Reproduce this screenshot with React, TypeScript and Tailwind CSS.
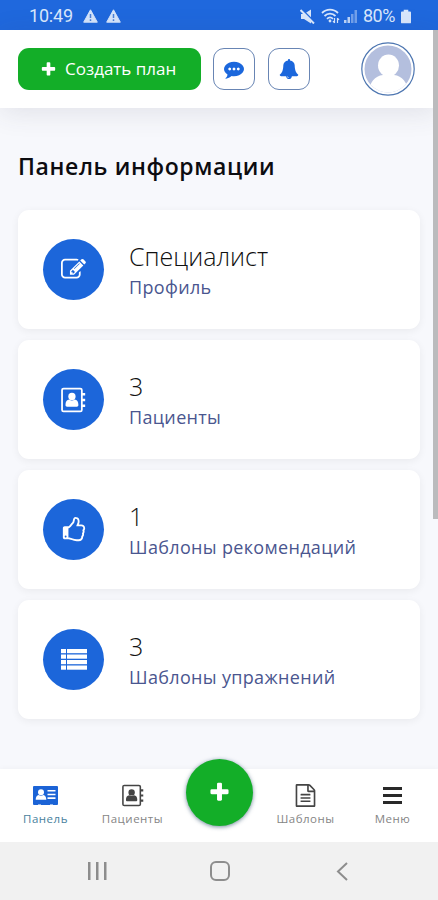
import type { ReactNode } from 'react';

function Glyph({ d, className }: { d: string; className: string }) {
  return (
    <svg viewBox="0 0 1792 1792" fill="currentColor" className={className}>
      <path d={d} />
    </svg>
  );
}

const PLUS =
  'M1600 736v192q0 40-28 68t-68 28h-416v416q0 40-28 68t-68 28h-192q-40 0-68-28t-28-68v-416h-416q-40 0-68-28t-28-68v-192q0-40 28-68t68-28h416v-416q0-40 28-68t68-28h192q40 0 68 28t28 68v416h416q40 0 68 28t28 68z';
const EDIT =
  'M888 1184l116-116-152-152-116 116v56h96v96h56zm440-720q-16-16-33 1l-350 350q-17 17-1 33t33-1l350-350q17-17 1-33zm80 594v190q0 119-84.5 203.5t-203.5 84.5h-832q-119 0-203.5-84.5t-84.5-203.5v-832q0-119 84.5-203.5t203.5-84.5h832q63 0 117 25 15 7 18 23 3 17-9 29l-49 49q-14 14-32 8-23-6-45-6h-832q-66 0-113 47t-47 113v832q0 66 47 113t113 47h832q66 0 113-47t47-113v-126q0-13 9-22l64-64q15-15 35-7t20 29zm-96-738l288 288-672 672h-288v-288zm444 132l-92 92-288-288 92-92q28-28 68-28t68 28l152 152q28 28 28 68t-28 68z';
const COMMENT =
  'M640 896q0-53-37.5-90.5t-90.5-37.5-90.5 37.5-37.5 90.5 37.5 90.5 90.5 37.5 90.5-37.5 37.5-90.5zm384 0q0-53-37.5-90.5t-90.5-37.5-90.5 37.5-37.5 90.5 37.5 90.5 90.5 37.5 90.5-37.5 37.5-90.5zm384 0q0-53-37.5-90.5t-90.5-37.5-90.5 37.5-37.5 90.5 37.5 90.5 90.5 37.5 90.5-37.5 37.5-90.5zm384 0q0 174-120 321.5t-326 233-450 85.5q-110 0-211-18-173 173-435 229-52 10-86 13-12 1-22-6t-13-18q-4-15 20-37 5-5 23.5-21.5t25.5-23.5 23.5-25.5 24-31.5 20.5-37 20-48 14.5-57.5 12.5-72.5q-146-90-229.5-216.5t-83.5-269.5q0-174 120-321.5t326-233 450-85.5 450 85.5 326 233 120 321.5z';
const BELL =
  'M912 1696q0-16-16-16-59 0-101.5-42.5t-42.5-101.5q0-16-16-16t-16 16q0 73 51.5 124.5t124.5 51.5q16 0 16-16zm816-288q0 52-38 90t-90 38h-448q0 106-75 181t-181 75-181-75-75-181h-448q-52 0-90-38t-38-90q50-42 91-88t85-119.5 74.5-158.5 50-206 19.5-260q0-152 117-282.5t307-158.5q-8-19-8-39 0-40 28-68t68-28 68 28 28 68q0 20-8 39 190 28 307 158.5t117 282.5q0 139 19.5 260t50 206 74.5 158.5 85 119.5 91 88z';
const THUMB =
  'M384 1344q0-26-19-45t-45-19-45 19-19 45 19 45 45 19 45-19 19-45zm1152-576q0-51-39-89.5t-89-38.5h-352q0-58 48-159.5t48-160.5q0-98-32-145t-128-47q-26 26-38 85t-30.5 125.5-59.5 109.5q-22 23-77 91-4 5-23 30t-31.5 41-34.5 42.5-40 44-38.5 35.5-40 27-35.5 9h-32v640h32q13 0 31.5 3t33 6.5 38 11 35 11.5 35.5 12.5 29 10.5q211 73 342 73h121q192 0 192-167 0-26-5-56 30-16 47.5-52.5t17.5-73.5-18-69q53-50 53-119 0-25-10-55.5t-25-47.5q32-1 53.5-47t21.5-81zm128-1q0 89-49 163 9 33 9 69 0 77-38 144 3 21 3 43 0 101-60 178 1 139-85 219.5t-227 80.5h-129q-96 0-189.5-22.5t-216.5-65.5q-116-40-138-40h-288q-53 0-90.5-37.5t-37.5-90.5v-640q0-53 37.5-90.5t90.5-37.5h274q36-24 137-155 58-75 107-128 24-25 35.5-85.5t30.5-126.5 62-108q39-37 90-37 84 0 151 32.5t102 101.5 35 186q0 93-48 192h176q104 0 180 76t76 179z';
const FILE =
  'M1596 380q28 28 48 76t20 88v1152q0 40-28 68t-68 28h-1344q-40 0-68-28t-28-68v-1600q0-40 28-68t68-28h896q40 0 88 20t76 48zm-444-244v376h376q-10-29-22-41l-313-313q-12-12-41-22zm384 1528v-1024h-416q-40 0-68-28t-28-68v-416h-768v1536h1280zm-1024-864q0-14 9-23t23-9h704q14 0 23 9t9 23v64q0 14-9 23t-23 9h-704q-14 0-23-9t-9-23v-64zm736 224q14 0 23 9t9 23v64q0 14-9 23t-23 9h-704q-14 0-23-9t-9-23v-64q0-14 9-23t23-9h704zm0 256q14 0 23 9t9 23v64q0 14-9 23t-23 9h-704q-14 0-23-9t-9-23v-64q0-14 9-23t23-9h704z';

function AddressBook({ className }: { className: string }) {
  return (
    <svg viewBox="0 0 24 24" fill="none" stroke="currentColor" className={className}>
      <rect x="1" y="1" width="19" height="22" rx="1.5" strokeWidth="1.7" />
      <path d="M20 6.5h3.2M20 12h3.2M20 17.5h3.2" strokeWidth="2.4" />
      <circle cx="10.5" cy="8.6" r="3.5" fill="currentColor" stroke="none" />
      <path
        d="M4.3 16.8c0-3.2 1.300-5 3.600-5.200 1.600 1.100 3.600 1.100 5.200 0 2.300.2 3.600 2 3.600 5.200 0 .9-.6 1.600-1.500 1.600H5.800c-.9 0-1.500-.7-1.500-1.600z"
        fill="currentColor"
        stroke="none"
      />
    </svg>
  );
}

function IdCard() {
  return (
    <svg viewBox="0 0 25 19" className="h-[19px] w-[25px]">
      <rect width="25" height="19" rx="1" fill="#1b63d6" />
      <g fill="#fff">
        <circle cx="8" cy="6.3" r="3" />
        <path d="M2.7 13.8c0-3 1.1-4.6 3-4.9 1.4 1 3.2 1 4.6 0 1.9.3 3 1.9 3 4.9z" />
        <path d="M14.5 4h8v1.6h-8zM14.5 7.7h8v1.6h-8zM14.5 11.3h8v1.6h-8z" />
        <path d="M5 18.2h3v.8H5zM17 18.2h3v.8h-3z" opacity=".7" />
      </g>
    </svg>
  );
}

function ListIcon() {
  return (
    <svg viewBox="0 0 26 21" fill="currentColor" className="h-[21px] w-[26px]">
      {[0, 5.5, 11, 16.5].map((y) => (
        <g key={y}>
          <rect x="0" y={y} width="5" height="4.2" />
          <rect x="6" y={y} width="20" height="4.2" />
        </g>
      ))}
    </svg>
  );
}

function Warning() {
  return (
    <svg viewBox="0 0 15 14" className="h-[14px] w-[15px]">
      <path d="M7.5.8 14.3 13.2H.7z" fill="#d5e4fb" stroke="#d5e4fb" strokeLinejoin="round" />
      <path d="M7.5 5v4M7.5 10.3v1.7" stroke="#4a7fd8" strokeWidth="1.5" />
    </svg>
  );
}

function StatusBar() {
  return (
    <div className="flex h-[30px] shrink-0 items-center bg-[#1f68dd] pt-[2px] pr-[27px] pl-[29px] text-[#d9e7fc]">
      <span className="w-[54px] font-['Roboto'] text-[18px] leading-none tracking-[-0.2px]">10:49</span>
      <div className="flex gap-2">
        <Warning />
        <Warning />
      </div>
      <div className="ml-auto flex items-center">
        <svg viewBox="0 0 15 15" className="mr-[6px] h-[15px] w-[15px]">
          <path d="M1 5h3l7-4.5v14L4 10H1z" fill="currentColor" />
          <path d="M1.5 0 15 13.5" stroke="#1f68dd" strokeWidth="1.6" />
          <path d="M.5 1 14 14.5" stroke="currentColor" strokeWidth="2" />
        </svg>
        <svg viewBox="0 0 19 16" className="mr-[4px] h-[16px] w-[19px]" fill="none" stroke="currentColor" strokeWidth="1.8">
          <path d="M1 5c4.5-4.6 11.5-4.6 16 0M3.500 8c3.200-3.200 7.800-3.200 11 0M6 10.800c1.800-1.700 4.200-1.700 6 0" />
          <circle cx="9" cy="13" r="1.4" fill="currentColor" stroke="none" />
          <path d="M13.5 10v5m-1.5-2 1.5 2M16.500 15v-5m1.500 2-1.500-2" strokeWidth="1.2" />
        </svg>
        <svg viewBox="0 0 13 13" className="mr-[6px] h-[13px] w-[13px]" fill="currentColor">
          <path d="M0 10h2.500v3H0zM3.500 7H6v6H3.500z" opacity=".85" />
          <path d="M7 4h2.500v9H7zM10.500 0H13v13h-2.500z" opacity=".45" />
        </svg>
        <span className="w-[38px] font-['Roboto'] text-[18px] leading-none tracking-[-0.5px]">80%</span>
        <svg viewBox="0 0 11 15" className="h-[15px] w-[10px]" fill="currentColor">
          <path d="M3 0h5v2h2q1 0 1 1v11q0 1-1 1H1q-1 0-1-1V3q0-1 1-1h2z" />
        </svg>
      </div>
    </div>
  );
}

function Header() {
  return (
    <header className="z-10 flex h-[78px] shrink-0 items-center bg-white pr-[23px] pl-[18px] shadow-[0_4px_28px_rgba(60,60,80,0.12)]">
      <button className="flex h-[42px] w-[183px] items-center rounded-[11px] bg-[#13ae28] pl-[22px] text-white">
        <Glyph d={PLUS} className="mr-[8px] h-[17px] w-[17px]" />
        <span className="text-[17px] whitespace-nowrap">Создать план</span>
      </button>
      <button className="ml-3 flex h-[42px] w-[42px] items-center justify-center rounded-[11px] border border-[#6885b4] text-[#1b67dc]">
        <Glyph d={COMMENT} className="h-5 w-5" />
      </button>
      <button className="ml-[13px] flex h-[42px] w-[42px] items-center justify-center rounded-[11px] border border-[#6885b4] text-[#1b67dc]">
        <Glyph d={BELL} className="h-[20px] w-[20px]" />
      </button>
      <svg viewBox="0 0 54 54" className="ml-auto h-[54px] w-[54px]">
        <clipPath id="avatar">
          <circle cx="27" cy="27" r="23.5" />
        </clipPath>
        <circle cx="27" cy="27" r="26.2" fill="#fff" stroke="#4c75b0" strokeWidth="1.2" />
        <g clipPath="url(#avatar)">
          <path d="M0 0h54v54H0z" fill="#b4bfde" />
          <ellipse cx="27.500" cy="23.500" rx="10.500" ry="11" fill="#fff" />
          <path d="M22 30h11v3c9 1 14 8 15 21H7c1-13 6-20 15-21z" fill="#fff" />
        </g>
      </svg>
    </header>
  );
}

function InfoCard({ icon, value, label }: { icon: ReactNode; value: string; label: string }) {
  return (
    <div className="flex h-[119px] items-center rounded-[11px] bg-white pl-[25px] shadow-[0_2px_9px_rgba(0,0,0,0.06)]">
      <div className="flex h-[61px] w-[61px] items-center justify-center rounded-full bg-[#1c66da] text-white">{icon}</div>
      <div className="ml-[25px] pt-[2px]">
        <div className="text-[25px] leading-[34px] font-light text-[#111]">{value}</div>
        <div className="text-[18px] leading-[29px] tracking-[0.33px] text-[#4a568f]">{label}</div>
      </div>
    </div>
  );
}

function Tab({ icon, label, active }: { icon: ReactNode; label: string; active?: boolean }) {
  return (
    <div className={`flex w-[87px] flex-col items-center pt-[14px] ${active ? 'text-[#487f9d]' : 'text-[#858585]'}`}>
      <div className="flex h-[24px] items-center text-[#444]">{icon}</div>
      <span className="mt-[4px] text-[11.5px] leading-[16px] tracking-[0.5px]">{label}</span>
    </div>
  );
}

export default function App() {
  return (
    <div className="relative flex h-[900px] w-[438px] flex-col overflow-hidden bg-[#f7f8fc] font-['Open_Sans','Noto_Sans',sans-serif]">
      <StatusBar />
      <Header />

      <main className="flex-1 px-[18px]">
        <h1 className="mt-[42px] text-[23px] leading-[32px] font-semibold tracking-[0.63px] whitespace-nowrap text-[#0c0c10]">
          Панель информации
        </h1>
        <div className="mt-[28px] flex flex-col gap-[11px]">
          <InfoCard icon={<Glyph d={EDIT} className="h-[25px] w-[25px]" />} value="Специалист" label="Профиль" />
          <InfoCard icon={<AddressBook className="h-[26px] w-[25px]" />} value="3" label="Пациенты" />
          <InfoCard icon={<Glyph d={THUMB} className="h-[26px] w-[26px]" />} value="1" label="Шаблоны рекомендаций" />
          <InfoCard icon={<ListIcon />} value="3" label="Шаблоны упражнений" />
        </div>
      </main>

      {/* Bottom tabs */}
      <nav className="flex h-[73px] shrink-0 bg-white pl-[2px] shadow-[0_-1px_5px_rgba(0,0,0,0.03)]">
        <Tab icon={<IdCard />} label="Панель" active />
        <Tab icon={<AddressBook className="h-[23px] w-[22px]" />} label="Пациенты" />
        <div className="flex w-[86px] justify-center">
          <button className="-mt-[10px] flex h-[67px] w-[67px] items-center justify-center rounded-full bg-[#13ae28] text-white shadow-[0_1px_4px_rgba(20,60,90,0.6)]">
            <Glyph d={PLUS} className="h-[23px] w-[23px]" />
          </button>
        </div>
        <Tab icon={<Glyph d={FILE} className="h-[23px] w-[23px]" />} label="Шаблоны" />
        <Tab
          icon={
            <svg viewBox="0 0 19 17" fill="currentColor" className="h-[17px] w-[19px] text-[#292929]">
              <path d="M0 0h19v3H0zM0 7h19v3H0zM0 14h19v3H0z" />
            </svg>
          }
          label="Меню"
        />
      </nav>

      {/* Android buttons */}
      <div className="flex h-[58px] shrink-0 items-center justify-between bg-[#f1f1f1] pr-[90px] pl-[88px] text-[#8d8d8d]">
        <svg viewBox="0 0 19 18" className="h-[18px] w-[19px]" fill="currentColor">
          <path d="M0 0h2.5v18H0zM8 0h2.5v18H8zM16 0h2.5v18H16z" />
        </svg>
        <div className="mr-[3px] h-[20px] w-[20px] rounded-[6px] border-2 border-[#8d8d8d]" />
        <svg viewBox="0 0 12 19" className="h-[19px] w-[12px]" fill="none" stroke="currentColor" strokeWidth="2">
          <path d="M11 1 2 9.5 11 18" />
        </svg>
      </div>

      {/* Scrollbar */}
      <div className="absolute top-[30px] right-0 z-20 h-[489px] w-[5px] bg-[#bbbbbd]" />
    </div>
  );
}
